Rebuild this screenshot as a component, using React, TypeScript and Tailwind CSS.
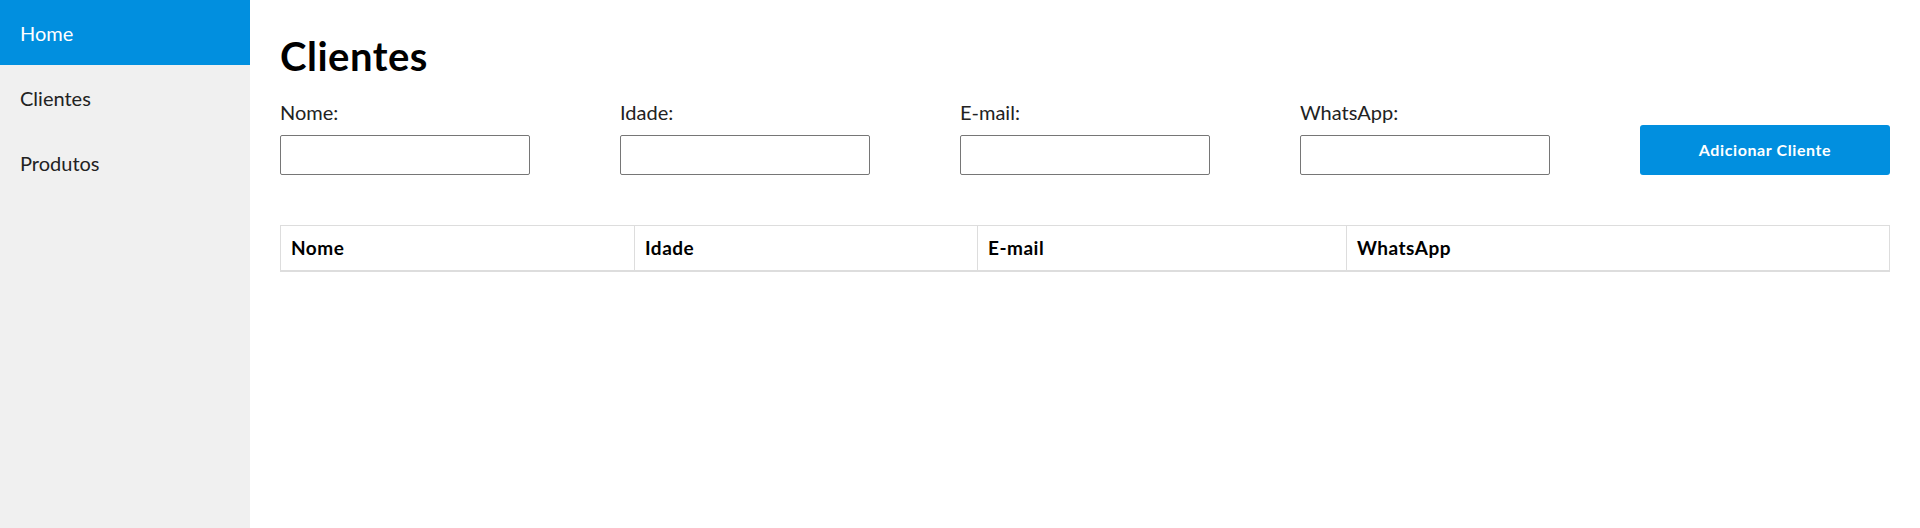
import React from "react";

const CAMPOS = ["Nome:", "Idade:", "E-mail:", "WhatsApp:"];

const COLUNAS: { nome: string; largura: string }[] = [
  { nome: "Nome", largura: "w-[354px]" },
  { nome: "Idade", largura: "w-[343px]" },
  { nome: "E-mail", largura: "w-[369px]" },
  { nome: "WhatsApp", largura: "" },
];

export default function App() {
  return (
    <div className="flex min-h-[528px] bg-white font-['Lato',sans-serif] text-black">
      <nav className="w-[250px] shrink-0 bg-[#f0f0f0]">
        <a className="flex h-[65px] items-center bg-[#018fdf] px-5 text-[20px] text-white">
          Home
        </a>
        <a className="flex h-[65px] items-center px-5 text-[20px] text-[#222]">
          Clientes
        </a>
        <a className="flex h-[65px] items-center px-5 text-[20px] text-[#222]">
          Produtos
        </a>
      </nav>

      <main className="flex-1 px-[30px] pt-[32px]">
        <h1 className="text-[40px] font-bold leading-[1.2] tracking-[0.5px]">
          Clientes
        </h1>

        <div className="mt-[20px] grid grid-cols-[repeat(5,250px)] items-end gap-x-[90px]">
          {CAMPOS.map((campo) => (
            <label key={campo} className="flex flex-col">
              <span className="text-[20px] leading-[1.2] text-[#222]">
                {campo}
              </span>
              <input
                type="text"
                className="mt-[11px] h-[40px] w-[250px] rounded-[2px] border border-[#767676] bg-white px-2"
              />
            </label>
          ))}
          <button
            type="button"
            className="h-[50px] w-[250px] rounded-[3px] bg-[#018fdf] text-[16px] font-bold tracking-[0.6px] text-white"
          >
            Adicionar Cliente
          </button>
        </div>

        <table className="mt-[50px] w-full border-collapse border border-[#ddd]">
          <thead>
            <tr className="border-b-2 border-[#ddd]">
              {COLUNAS.map((col) => (
                <th
                  key={col.nome}
                  className={`${col.largura} border-r border-[#ddd] px-[10px] py-[11px] text-left text-[19px] font-bold leading-[22px] tracking-[0.5px]`}
                >
                  {col.nome}
                </th>
              ))}
            </tr>
          </thead>
          <tbody />
        </table>
      </main>
    </div>
  );
}
